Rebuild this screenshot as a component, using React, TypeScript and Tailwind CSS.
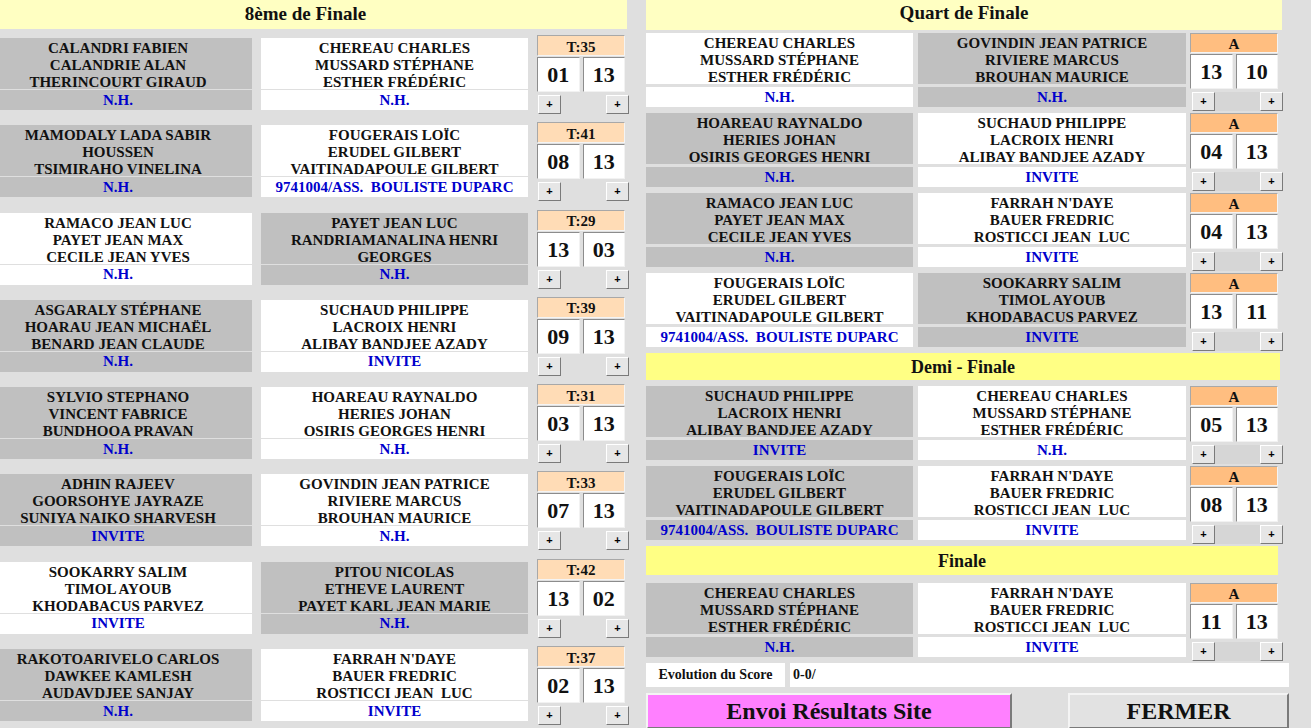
import React from "react";

type Team = { lines: string[]; club: string; gray: boolean };
type Match = { a: Team; b: Team; label: string; s1: string; s2: string };

const DUPARC = "9741004/ASS.  BOULISTE DUPARC";

const T = (lines: string[], club: string, gray: boolean): Team => ({ lines, club, gray });

const eighth: Match[] = [
  { a: T(["CALANDRI FABIEN", "CALANDRIE ALAN", "THERINCOURT GIRAUD"], "N.H.", true), b: T(["CHEREAU CHARLES", "MUSSARD STÉPHANE", "ESTHER FRÉDÉRIC"], "N.H.", false), label: "T:35", s1: "01", s2: "13" },
  { a: T(["MAMODALY LADA SABIR", "HOUSSEN", "TSIMIRAHO VINELINA"], "N.H.", true), b: T(["FOUGERAIS LOÏC", "ERUDEL GILBERT", "VAITINADAPOULE GILBERT"], DUPARC, false), label: "T:41", s1: "08", s2: "13" },
  { a: T(["RAMACO JEAN LUC", "PAYET JEAN MAX", "CECILE JEAN YVES"], "N.H.", false), b: T(["PAYET JEAN LUC", "RANDRIAMANALINA HENRI", "GEORGES"], "N.H.", true), label: "T:29", s1: "13", s2: "03" },
  { a: T(["ASGARALY STÉPHANE", "HOARAU JEAN MICHAËL", "BENARD JEAN CLAUDE"], "N.H.", true), b: T(["SUCHAUD PHILIPPE", "LACROIX HENRI", "ALIBAY BANDJEE AZADY"], "INVITE", false), label: "T:39", s1: "09", s2: "13" },
  { a: T(["SYLVIO STEPHANO", "VINCENT FABRICE", "BUNDHOOA PRAVAN"], "N.H.", true), b: T(["HOAREAU RAYNALDO", "HERIES JOHAN", "OSIRIS GEORGES HENRI"], "N.H.", false), label: "T:31", s1: "03", s2: "13" },
  { a: T(["ADHIN RAJEEV", "GOORSOHYE JAYRAZE", "SUNIYA NAIKO SHARVESH"], "INVITE", true), b: T(["GOVINDIN JEAN PATRICE", "RIVIERE MARCUS", "BROUHAN MAURICE"], "N.H.", false), label: "T:33", s1: "07", s2: "13" },
  { a: T(["SOOKARRY SALIM", "TIMOL AYOUB", "KHODABACUS PARVEZ"], "INVITE", false), b: T(["PITOU NICOLAS", "ETHEVE LAURENT", "PAYET KARL JEAN MARIE"], "N.H.", true), label: "T:42", s1: "13", s2: "02" },
  { a: T(["RAKOTOARIVELO CARLOS", "DAWKEE KAMLESH", "AUDAVDJEE SANJAY"], "N.H.", true), b: T(["FARRAH N'DAYE", "BAUER FREDRIC", "ROSTICCI JEAN  LUC"], "INVITE", false), label: "T:37", s1: "02", s2: "13" },
];

const CHEREAU = ["CHEREAU CHARLES", "MUSSARD STÉPHANE", "ESTHER FRÉDÉRIC"];
const FARRAH = ["FARRAH N'DAYE", "BAUER FREDRIC", "ROSTICCI JEAN  LUC"];
const SUCHAUD = ["SUCHAUD PHILIPPE", "LACROIX HENRI", "ALIBAY BANDJEE AZADY"];
const FOUGERAIS = ["FOUGERAIS LOÏC", "ERUDEL GILBERT", "VAITINADAPOULE GILBERT"];

const quarter: Match[] = [
  { a: T(CHEREAU, "N.H.", false), b: T(["GOVINDIN JEAN PATRICE", "RIVIERE MARCUS", "BROUHAN MAURICE"], "N.H.", true), label: "A", s1: "13", s2: "10" },
  { a: T(["HOAREAU RAYNALDO", "HERIES JOHAN", "OSIRIS GEORGES HENRI"], "N.H.", true), b: T(SUCHAUD, "INVITE", false), label: "A", s1: "04", s2: "13" },
  { a: T(["RAMACO JEAN LUC", "PAYET JEAN MAX", "CECILE JEAN YVES"], "N.H.", true), b: T(FARRAH, "INVITE", false), label: "A", s1: "04", s2: "13" },
  { a: T(FOUGERAIS, DUPARC, false), b: T(["SOOKARRY SALIM", "TIMOL AYOUB", "KHODABACUS PARVEZ"], "INVITE", true), label: "A", s1: "13", s2: "11" },
];

const semi: Match[] = [
  { a: T(SUCHAUD, "INVITE", true), b: T(CHEREAU, "N.H.", false), label: "A", s1: "05", s2: "13" },
  { a: T(FOUGERAIS, DUPARC, true), b: T(FARRAH, "INVITE", false), label: "A", s1: "08", s2: "13" },
];

const final: Match[] = [
  { a: T(CHEREAU, "N.H.", true), b: T(FARRAH, "INVITE", false), label: "A", s1: "11", s2: "13" },
];

function TeamBox({ team, wide, right }: { team: Team; wide: string; right: boolean }) {
  const bg = team.gray ? "bg-[#c0c0c0]" : "bg-white";
  return (
    <div className={`${wide} flex flex-col ${right ? "gap-[3px]" : "gap-px"}`}>
      <div className={`${bg} h-[51px] pt-[2px] flex flex-col items-center justify-start text-[15px] leading-[17px] font-bold text-[#111]`}>
        {team.lines.map((l, i) => (
          <div key={i} className="whitespace-pre">{l}</div>
        ))}
      </div>
      <div className={`${bg} h-[20px] flex items-center justify-center text-[15px] leading-[17px] font-bold text-[#0000cc] whitespace-pre`}>
        {team.club}
      </div>
    </div>
  );
}

function Plus() {
  return (
    <div className="w-[23px] h-[19px] bg-[#e6e6e6] border border-t-white border-l-white border-r-[#7a7a7a] border-b-[#7a7a7a] flex items-center justify-center text-[11px] leading-none font-bold text-black font-['Liberation_Sans',sans-serif]">
      +
    </div>
  );
}

function ScoreBox({ m, right }: { m: Match; right: boolean }) {
  const hdr = right ? "bg-[#ffbe80] h-[20px] pt-[2px]" : "bg-[#ffdcb6] h-[21px] pt-[3px]";
  const cell =
    "h-[35px] pt-px bg-white border border-t-[#8c8c8c] border-l-[#8c8c8c] border-r-[#f2f2f2] border-b-[#f2f2f2] flex items-center justify-center text-[22px] leading-[26px] font-bold text-[#111]";
  return (
    <div className="w-[88px] flex flex-col">
      <div className={`${hdr} border border-t-[#a8a8a8] border-l-[#a8a8a8] border-r-[#f4f4f4] border-b-[#f4f4f4] flex items-center justify-center text-[15px] leading-[15px] font-bold text-[#111]`}>
        {m.label}
      </div>
      <div className="mt-px grid grid-cols-2 gap-[3px]">
        <div className={cell}>{m.s1}</div>
        <div className={cell}>{m.s2}</div>
      </div>
      <div className={`mt-[3px] w-[91px] flex justify-between ${right ? "ml-[2px] bg-[#d6d6d6]" : "ml-px"}`}>
        <Plus />
        <Plus />
      </div>
    </div>
  );
}

function LeftRow({ m }: { m: Match }) {
  return (
    <div className="h-[87.3px] shrink-0 flex items-start">
      <div className="mt-[3px]">
        <TeamBox team={m.a} wide="w-[268px]" right={false} />
      </div>
      <div className="mt-[3px] ml-[9px]">
        <TeamBox team={m.b} wide="w-[267px]" right={false} />
      </div>
      <div className="ml-[9px]">
        <ScoreBox m={m} right={false} />
      </div>
    </div>
  );
}

function RightRow({ m }: { m: Match }) {
  return (
    <div className="h-[80px] shrink-0 flex items-start">
      <TeamBox team={m.a} wide="w-[267px]" right={true} />
      <div className="ml-[5px]">
        <TeamBox team={m.b} wide="w-[268px]" right={true} />
      </div>
      <div className="ml-[4px]">
        <ScoreBox m={m} right={true} />
      </div>
    </div>
  );
}

export default function App() {
  return (
    <div className="w-[1311px] h-[728px] overflow-hidden bg-[#dfdfdf] flex items-start font-['Liberation_Serif','Times_New_Roman',serif] text-[#111]">
      <div className="ml-[-16px] w-[643px] flex flex-col shrink-0">
        <div className="h-[29px] shrink-0 pb-[2px] bg-[#ffffc2] flex items-center justify-center text-[19px] leading-[22px] font-bold">8ème de Finale</div>
        <div className="mt-[6px] flex flex-col">
          {eighth.map((m, i) => (
            <LeftRow key={i} m={m} />
          ))}
        </div>
      </div>
      <div className="ml-[19px] w-[643px] flex flex-col shrink-0">
        <div className="w-[636px] h-[30px] shrink-0 pb-[4px] bg-[#ffffc2] flex items-center justify-center text-[19px] leading-[22px] font-bold">Quart de Finale</div>
        <div className="mt-[3px] flex flex-col">
          {quarter.map((m, i) => (
            <RightRow key={i} m={m} />
          ))}
        </div>
        <div className="w-[634px] h-[27px] shrink-0 bg-[#ffff84] flex items-center justify-center text-[18px] leading-[22px] font-bold">Demi - Finale</div>
        <div className="mt-[6px] flex flex-col">
          {semi.map((m, i) => (
            <RightRow key={i} m={m} />
          ))}
        </div>
        <div className="w-[632px] h-[29px] shrink-0 bg-[#ffff84] flex items-center justify-center text-[18px] leading-[22px] font-bold">Finale</div>
        <div className="mt-[8px] flex flex-col">
          {final.map((m, i) => (
            <RightRow key={i} m={m} />
          ))}
        </div>
        <div className="flex h-[24px] shrink-0">
          <div className="w-[139px] bg-white flex items-center justify-center text-[14px] leading-[18px] font-bold">Evolution du Score</div>
          <div className="ml-[5px] flex-1 bg-white flex items-center pl-[3px] text-[14px] leading-[18px] font-bold">0-0/</div>
        </div>
        <div className="mt-[6px] flex shrink-0">
          <div className="w-[366px] h-[36px] bg-[#ff80ff] border-2 border-t-[#f4f4f4] border-l-[#f4f4f4] border-r-[#7a7a7a] border-b-[#7a7a7a] flex items-center justify-center text-[24px] leading-[28px] font-bold">
            Envoi Résultats Site
          </div>
          <div className="ml-[56px] w-[221px] h-[36px] bg-[#e2e2e2] border-2 border-t-[#f4f4f4] border-l-[#f4f4f4] border-r-[#7a7a7a] border-b-[#7a7a7a] flex items-center justify-center text-[24px] leading-[28px] font-bold">
            FERMER
          </div>
        </div>
      </div>
    </div>
  );
}
